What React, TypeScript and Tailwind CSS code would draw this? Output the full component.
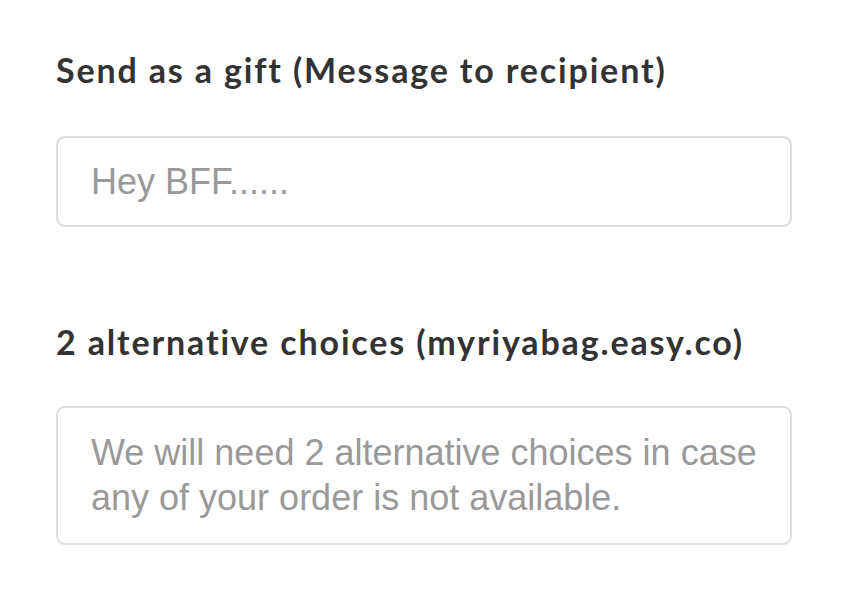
import React from "react";

export default function App() {
  return (
    <div className="w-[848px] h-[616px] bg-white px-[56px] pt-[50px] flex flex-col">
      <label className="block font-['Lato',sans-serif] font-bold text-[34px] leading-[40px] text-[#333333] tracking-[1.85px]">
        Send as a gift (Message to recipient)
      </label>
      <input
        type="text"
        placeholder="Hey BFF......"
        className="mt-[46px] w-[736px] h-[91px] border-2 border-[#dddddd] rounded-[9px] pl-[33px] pr-[20px] font-['Liberation_Sans',Arial,sans-serif] text-[36px] leading-[45px] text-[#333] placeholder:text-[#999999] outline-none bg-white"
      />
      <label className="block mt-[95px] font-['Lato',sans-serif] font-bold text-[34px] leading-[40px] text-[#333333] tracking-[1.85px]">
        2 alternative choices (myriyabag.easy.co)
      </label>
      <textarea
        rows={2}
        placeholder="We will need 2 alternative choices in case any of your order is not available."
        className="mt-[44px] w-[736px] h-[139px] border-2 border-[#dddddd] rounded-[9px] pl-[33px] pr-[20px] py-[22px] font-['Liberation_Sans',Arial,sans-serif] text-[36px] leading-[45px] text-[#333] placeholder:text-[#999999] outline-none resize-none overflow-hidden bg-white"
      />
    </div>
  );
}
